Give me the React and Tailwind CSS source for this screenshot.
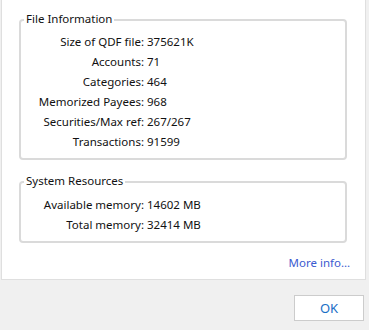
import React from "react";

const font = { fontFamily: '"Noto Sans", "Liberation Sans", sans-serif' };

function Row({ label, value }) {
  return (
    <div className="flex h-[20px] items-center whitespace-nowrap">
      <div className="w-[123px] text-right">{label}</div>
      <div className="pl-[3px]">{value}</div>
    </div>
  );
}

function Group({ title, children, className }) {
  return (
    <div className={"relative rounded-[4px] border-2 border-[#dadada] " + className}>
      <span className="absolute left-[3px] top-[-10px] h-[16px] bg-white px-[2px] leading-[16px]">
        {title}
      </span>
      {children}
    </div>
  );
}

export default function App() {
  return (
    <div
      className="h-[330px] w-[369px] overflow-hidden bg-[#f0f0f0] text-[11.5px] leading-[16px] text-[#111]"
      style={font}
    >
      <div className="ml-[1px] flex h-[280px] w-[365px] flex-col border-x border-b border-[#dfdfdf] bg-white pl-[17px] pr-[18px]">
        <Group title="File Information" className="mt-[19px] h-[141px] pt-[11px]">
          <Row label="Size of QDF file:" value="375621K" />
          <Row label="Accounts:" value="71" />
          <Row label="Categories:" value="464" />
          <Row label="Memorized Payees:" value="968" />
          <Row label="Securities/Max ref:" value="267/267" />
          <Row label="Transactions:" value="91599" />
        </Group>
        <Group title="System Resources" className="mt-[21px] h-[62px] pt-[12px]">
          <Row label="Available memory:" value="14602 MB" />
          <Row label="Total memory:" value="32414 MB" />
        </Group>
        <div className="mt-[12px] flex justify-end">
          <span className="mr-[-3px] text-[#3b5bd0]">More info…</span>
        </div>
      </div>
      <div className="flex justify-end pr-[5px] pt-[15px]">
        <button className="h-[26px] w-[70px] border border-[#cccccc] bg-white text-[13px] text-[#1a6ec6]">
          OK
        </button>
      </div>
    </div>
  );
}
